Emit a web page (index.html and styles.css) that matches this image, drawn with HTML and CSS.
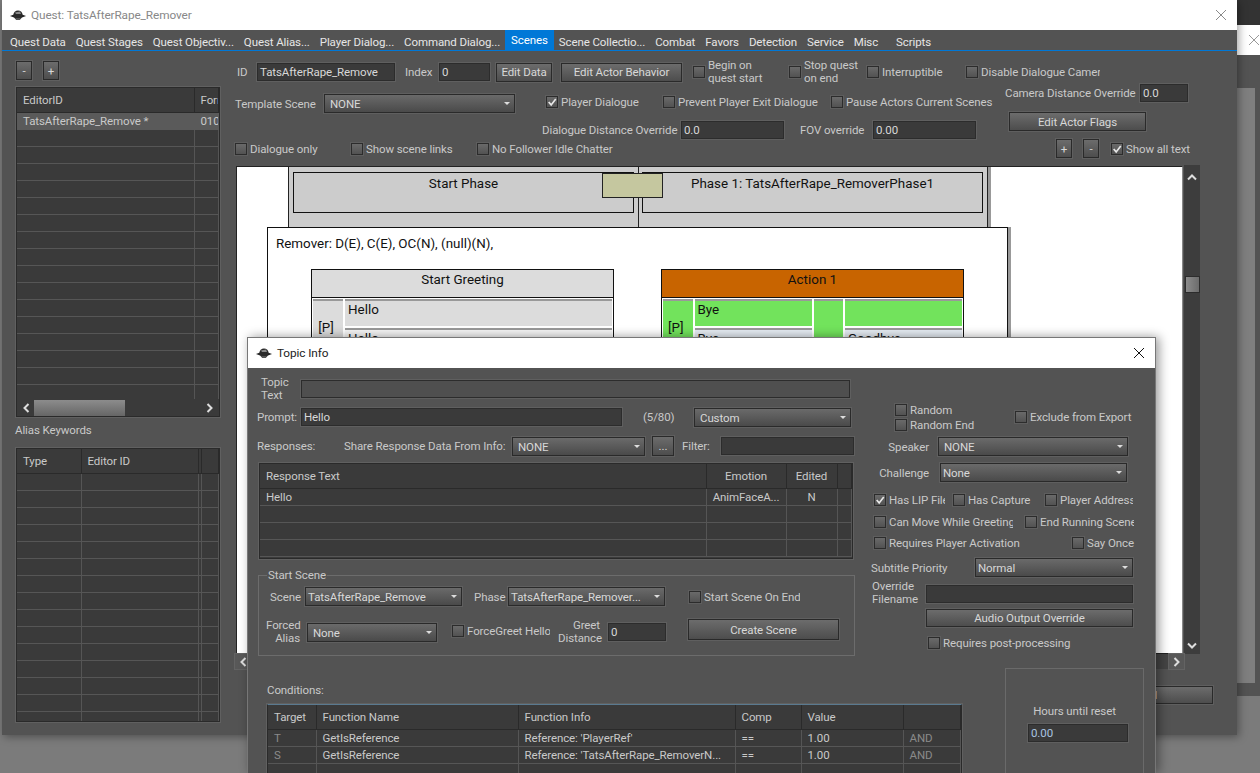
FILE: index.html
```html
<!DOCTYPE html>
<html lang="en">
<head>
    <meta charset="UTF-8">
    <title>Quest: TatsAfterRape_Remover</title>
    <link rel="stylesheet" href="styles.css">
</head>
<body>
    <svg class="defs" width="0" height="0">
        <symbol id="app-icon" viewBox="0 0 16 12">
            <path d="M0 7 L4 5.5 L12 5.5 L16 7 L12 8.5 L4 8.5 Z" fill="#222"/>
            <circle cx="8" cy="6" r="4.6" fill="#2a2a2a"/>
            <path d="M5 3.5 L10 2.5 L11 5 L6 5 Z" fill="#8a8a8a"/>
            <path d="M5 9 L11 9 L10 11 L6 11 Z" fill="#555"/>
        </symbol>
        <symbol id="close-x" viewBox="0 0 12 12">
            <path d="M1 1 L11 11 M11 1 L1 11" fill="none" stroke="currentColor" stroke-width="1"/>
        </symbol>
        <symbol id="tick" viewBox="0 0 12 12">
            <path d="M2 6 L5 9.5 L10.5 2.5" fill="none" stroke="#e8e8e8" stroke-width="2"/>
        </symbol>
        <symbol id="chev-up" viewBox="0 0 12 8">
            <path d="M2 6.5 L6 2.5 L10 6.5" fill="none" stroke="#ddd" stroke-width="2"/>
        </symbol>
        <symbol id="chev-down" viewBox="0 0 12 8">
            <path d="M2 1.5 L6 5.5 L10 1.5" fill="none" stroke="#ddd" stroke-width="2"/>
        </symbol>
        <symbol id="chev-left" viewBox="0 0 8 12">
            <path d="M6.5 2 L2.5 6 L6.5 10" fill="none" stroke="#ddd" stroke-width="2"/>
        </symbol>
        <symbol id="chev-right" viewBox="0 0 8 12">
            <path d="M1.5 2 L5.5 6 L1.5 10" fill="none" stroke="#ddd" stroke-width="2"/>
        </symbol>
    </svg>

    <!-- window behind the quest window, only its edge shows -->
    <div class="back-window">
        <div class="back-title"><svg class="back-x"><use href="#close-x"/></svg></div>
        <div class="back-panel"></div>
    </div>

    <!-- quest window -->
    <div class="window quest-window">
        <div class="titlebar">
            <svg class="app-icon"><use href="#app-icon"/></svg>
            <span class="title-text muted-title">Quest: TatsAfterRape_Remover</span>
            <svg class="close-x light-x"><use href="#close-x"/></svg>
        </div>
        <div class="tabs">
            <span class="tab">Quest Data</span>
            <span class="tab">Quest Stages</span>
            <span class="tab">Quest Objectiv...</span>
            <span class="tab">Quest Alias...</span>
            <span class="tab">Player Dialog...</span>
            <span class="tab">Command Dialog...</span>
            <span class="tab active">Scenes</span>
            <span class="tab">Scene Collectio...</span>
            <span class="tab">Combat</span>
            <span class="tab">Favors</span>
            <span class="tab">Detection</span>
            <span class="tab">Service</span>
            <span class="tab">Misc</span>
            <span class="tab ml-8">Scripts</span>
        </div>

        <div class="quest-body">
            <div class="quest-side">
                <div class="row h-19">
                    <button class="btn w-16 ml-1">-</button>
                    <button class="btn w-16 ml-11">+</button>
                </div>
                <div class="grid-box side-table">
                    <table class="grid">
                        <colgroup><col class="w-177"><col></colgroup>
                        <tr><th>EditorID</th><th>Form</th></tr>
                        <tr class="selected"><td>TatsAfterRape_Remove *</td><td>010</td></tr>
                        <tr><td></td><td></td></tr>
                        <tr><td></td><td></td></tr>
                        <tr><td></td><td></td></tr>
                        <tr><td></td><td></td></tr>
                        <tr><td></td><td></td></tr>
                        <tr><td></td><td></td></tr>
                        <tr><td></td><td></td></tr>
                        <tr><td></td><td></td></tr>
                        <tr><td></td><td></td></tr>
                        <tr><td></td><td></td></tr>
                        <tr><td></td><td></td></tr>
                        <tr><td></td><td></td></tr>
                        <tr><td></td><td></td></tr>
                        <tr><td></td><td></td></tr>
                        <tr><td></td><td></td></tr>
                        <tr><td></td><td></td></tr>
                    </table>
                    <div class="side-hscroll">
                        <svg class="chev-h"><use href="#chev-left"/></svg>
                        <span class="side-thumb"></span>
                        <svg class="chev-h chev-end"><use href="#chev-right"/></svg>
                    </div>
                </div>
                <div class="alias-label">Alias Keywords</div>
                <div class="grid-box alias-table">
                    <table class="grid">
                        <colgroup><col class="w-64"><col class="w-117"><col class="w-3"><col></colgroup>
                        <tr><th>Type</th><th>Editor ID</th><th></th><th></th></tr>
                        <tr><td></td><td></td><td></td><td></td></tr>
                        <tr><td></td><td></td><td></td><td></td></tr>
                        <tr><td></td><td></td><td></td><td></td></tr>
                        <tr><td></td><td></td><td></td><td></td></tr>
                        <tr><td></td><td></td><td></td><td></td></tr>
                        <tr><td></td><td></td><td></td><td></td></tr>
                        <tr><td></td><td></td><td></td><td></td></tr>
                        <tr><td></td><td></td><td></td><td></td></tr>
                        <tr><td></td><td></td><td></td><td></td></tr>
                        <tr><td></td><td></td><td></td><td></td></tr>
                        <tr><td></td><td></td><td></td><td></td></tr>
                        <tr><td></td><td></td><td></td><td></td></tr>
                        <tr><td></td><td></td><td></td><td></td></tr>
                        <tr><td></td><td></td><td></td><td></td></tr>
                        <tr><td></td><td></td><td></td><td></td></tr>
                    </table>
                </div>
            </div>

            <div class="quest-main">
                <div class="row h-22">
                    <label class="w-22 pl-2">ID</label>
                    <div class="input w-138">TatsAfterRape_Remove</div>
                    <label class="ml-10 w-34">Index</label>
                    <div class="input w-51">0</div>
                    <button class="btn w-56 ml-6 h-19">Edit Data</button>
                    <button class="btn w-121 ml-9 h-19">Edit Actor Behavior</button>
                    <div class="check-item w-96 ml-11"><span class="check"></span><span class="two-line">Begin on<br>quest start</span></div>
                    <div class="check-item w-78"><span class="check"></span><span class="two-line">Stop quest<br>on end</span></div>
                    <div class="check-item w-99"><span class="check"></span><span>Interruptible</span></div>
                    <div class="check-item"><span class="check"></span><span class="clip w-119">Disable Dialogue Camera</span></div>
                </div>

                <div class="quest-lower">
                    <div class="w-770">
                        <div class="row h-19 mt-10">
                            <label class="w-89">Template Scene</label>
                            <div class="select w-191">NONE</div>
                            <div class="check-item raised w-117 ml-31"><span class="check"><svg><use href="#tick"/></svg></span><span>Player Dialogue</span></div>
                            <div class="check-item raised w-168"><span class="check"></span><span>Prevent Player Exit Dialogue</span></div>
                            <div class="check-item raised"><span class="check"></span><span>Pause Actors Current Scenes</span></div>
                        </div>
                        <div class="row h-18 mt-8">
                            <label class="w-139 ml-307">Dialogue Distance Override</label>
                            <div class="input w-103">0.0</div>
                            <label class="w-73 ml-16">FOV override</label>
                            <div class="input w-103">0.00</div>
                        </div>
                        <div class="row h-18 mt-1">
                            <div class="check-item w-116"><span class="check"></span><span>Dialogue only</span></div>
                            <div class="check-item w-126"><span class="check"></span><span>Show scene links</span></div>
                            <div class="check-item"><span class="check"></span><span>No Follower Idle Chatter</span></div>
                        </div>
                    </div>
                    <div class="camera-block">
                        <div class="row h-18">
                            <label class="w-135">Camera Distance Override</label>
                            <div class="input w-48">0.0</div>
                        </div>
                        <button class="btn w-137 h-19 ml-4 mt-10">Edit Actor Flags</button>
                        <div class="row h-19 mt-8 ml-51">
                            <button class="btn w-16">+</button>
                            <button class="btn w-16 ml-11">-</button>
                            <div class="check-item ml-12"><span class="check"><svg><use href="#tick"/></svg></span><span>Show all text</span></div>
                        </div>
                    </div>
                </div>

                <div class="scene-view">
                    <div class="canvas">
                        <div class="phases">
                            <div class="phase-half"><div class="phase-box">Start Phase</div></div>
                            <div class="phase-half"><div class="phase-box">Phase 1: TatsAfterRape_RemoverPhase1</div></div>
                            <div class="phase-link"></div>
                        </div>
                        <div class="actor-box">
                            <div class="actor-name">Remover: D(E), C(E), OC(N), (null)(N),</div>
                            <div class="actions">
                                <div class="action">
                                    <div class="action-head grey-head">Start Greeting</div>
                                    <div class="lines">
                                        <div class="line-tag">[P]</div>
                                        <div class="line-col">
                                            <div class="line-cell grey-cell">Hello</div>
                                            <div class="line-cell pale-cell">Hello</div>
                                        </div>
                                    </div>
                                </div>
                                <div class="action">
                                    <div class="action-head orange-head">Action 1</div>
                                    <div class="lines">
                                        <div class="line-tag green-cell">[P]</div>
                                        <div class="line-col narrow">
                                            <div class="line-cell green-cell">Bye</div>
                                            <div class="line-cell blue-cell">Bye</div>
                                        </div>
                                        <div class="line-gap green-cell"></div>
                                        <div class="line-col narrow">
                                            <div class="line-cell green-cell"></div>
                                            <div class="line-cell blue-cell">Goodbye</div>
                                        </div>
                                    </div>
                                </div>
                            </div>
                        </div>
                    </div>
                    <div class="vscroll">
                        <svg class="chev-v"><use href="#chev-up"/></svg>
                        <span class="vthumb"></span>
                        <svg class="chev-v chev-end"><use href="#chev-down"/></svg>
                    </div>
                </div>
                <div class="hscroll">
                    <span class="hscroll-btn"><svg class="chev-h"><use href="#chev-left"/></svg></span>
                    <span class="hscroll-btn"><svg class="chev-h"><use href="#chev-right"/></svg></span>
                </div>
                <div class="quest-foot">
                    <button class="btn w-146 h-18">Cancel</button>
                </div>
            </div>
        </div>
    </div>

    <!-- topic info dialog -->
    <div class="window topic-window">
        <div class="titlebar">
            <svg class="app-icon"><use href="#app-icon"/></svg>
            <span class="title-text">Topic Info</span>
            <svg class="close-x"><use href="#close-x"/></svg>
        </div>
        <div class="topic-top">
            <div class="topic-left">
                <div class="row h-18 mt-12">
                    <label class="two-line w-40 ml-13">Topic<br>Text</label>
                    <div class="input off w-549"></div>
                </div>
                <div class="row h-18 mt-10">
                    <label class="w-44 ml-9">Prompt:</label>
                    <div class="input w-321">Hello</div>
                    <label class="w-51 ml-21">(5/80)</label>
                    <div class="select w-157">Custom</div>
                </div>
                <div class="row h-20 mt-10">
                    <label class="w-87 ml-9">Responses:</label>
                    <label class="w-168">Share Response Data From Info:</label>
                    <div class="select w-133">NONE</div>
                    <button class="btn w-22 h-20 ml-7">...</button>
                    <label class="w-39 ml-8">Filter:</label>
                    <div class="input w-133"></div>
                </div>
                <div class="grid-box response-table">
                    <table class="grid">
                        <colgroup><col class="w-446"><col class="w-80"><col class="w-51"><col></colgroup>
                        <tr><th>Response Text</th><th class="center">Emotion</th><th class="center">Edited</th><th></th></tr>
                        <tr><td>Hello</td><td class="center">AnimFaceA...</td><td class="center">N</td><td></td></tr>
                        <tr><td></td><td></td><td></td><td></td></tr>
                        <tr><td></td><td></td><td></td><td></td></tr>
                        <tr><td></td><td></td><td></td><td></td></tr>
                    </table>
                </div>
                <fieldset class="start-scene">
                    <legend>Start Scene</legend>
                    <div class="row h-19 mt-5">
                        <label class="w-35 ml-11">Scene</label>
                        <div class="select tight w-157">TatsAfterRape_Remove</div>
                        <label class="w-34 ml-12">Phase</label>
                        <div class="select tight w-157">TatsAfterRape_Remover...</div>
                        <div class="check-item ml-24"><span class="check"></span><span class="clip w-96">Start Scene On End</span></div>
                    </div>
                    <div class="row scene-row-b">
                        <label class="two-line right w-34 ml-7">Forced<br>Alias</label>
                        <div class="select w-130 ml-7">None</div>
                        <div class="check-item w-98 ml-15"><span class="check"></span><span class="clip w-83">ForceGreet Hello</span></div>
                        <label class="two-line right w-42 ml-8">Greet<br>Distance</label>
                        <div class="input w-58 ml-8">0</div>
                        <button class="btn create-btn w-151 ml-22">Create Scene</button>
                    </div>
                </fieldset>
            </div>

            <div class="topic-right">
                <div class="random-row">
                    <div class="w-120 ml-24">
                        <div class="check-item h-15"><span class="check"></span><span>Random</span></div>
                        <div class="check-item h-15"><span class="check"></span><span>Random End</span></div>
                    </div>
                    <div class="check-item"><span class="check"></span><span>Exclude from Export</span></div>
                </div>
                <div class="row h-19 mt-5">
                    <label class="right w-58">Speaker</label>
                    <div class="select w-190 ml-9">NONE</div>
                </div>
                <div class="row h-19 mt-7">
                    <label class="right w-58">Challenge</label>
                    <div class="select tight w-187 ml-11">None</div>
                </div>
                <div class="row h-18 mt-9 ml-3">
                    <div class="check-item w-79"><span class="check"><svg><use href="#tick"/></svg></span><span class="clip w-56">Has LIP File</span></div>
                    <div class="check-item w-92"><span class="check"></span><span>Has Capture</span></div>
                    <div class="check-item"><span class="check"></span><span class="clip w-73">Player Address</span></div>
                </div>
                <div class="row h-18 mt-4 ml-3">
                    <div class="check-item w-151"><span class="check"></span><span class="clip w-124">Can Move While Greeting</span></div>
                    <div class="check-item"><span class="check"></span><span class="clip w-94">End Running Scene</span></div>
                </div>
                <div class="row h-18 mt-3 ml-3">
                    <div class="check-item w-198"><span class="check"></span><span>Requires Player Activation</span></div>
                    <div class="check-item"><span class="check"></span><span>Say Once</span></div>
                </div>
                <div class="row h-19 mt-6">
                    <label class="w-104">Subtitle Priority</label>
                    <div class="select tight w-158">Normal</div>
                </div>
                <div class="row h-18 mt-8 ml-1">
                    <label class="two-line w-54 lift">Override<br>Filename</label>
                    <div class="input w-207"></div>
                </div>
                <button class="btn w-207 h-18 mt-6 ml-55">Audio Output Override</button>
                <div class="check-item h-12 mt-10 ml-57"><span class="check"></span><span>Requires post-processing</span></div>
            </div>
        </div>
        <div class="topic-bottom">
            <div class="conditions">
                <div class="conditions-label">Conditions:</div>
                <div class="grid-box conditions-table">
                    <table class="grid">
                        <colgroup><col class="w-48"><col class="w-202"><col class="w-217"><col class="w-66"><col class="w-102"><col></colgroup>
                        <tr><th>Target</th><th>Function Name</th><th>Function Info</th><th>Comp</th><th>Value</th><th></th></tr>
                        <tr><td class="faded">T</td><td>GetIsReference</td><td>Reference: 'PlayerRef'</td><td>==</td><td>1.00</td><td class="faded">AND</td></tr>
                        <tr><td class="faded">S</td><td>GetIsReference</td><td>Reference: 'TatsAfterRape_RemoverN...</td><td>==</td><td>1.00</td><td class="faded">AND</td></tr>
                        <tr><td></td><td></td><td></td><td></td><td></td><td></td></tr>
                    </table>
                </div>
            </div>
            <div class="hours-panel">
                <div class="hours-label">Hours until reset</div>
                <div class="input w-100 hours-input">0.00</div>
            </div>
        </div>
    </div>
</body>
</html>
```

FILE: styles.css
```css
* {
    margin: 0;
    padding: 0;
    box-sizing: border-box;
}

html, body {
    width: 1260px;
    height: 773px;
    overflow: hidden;
}

body {
    position: relative;
    background: #7b7b7b;
    font-family: Roboto, "Liberation Sans", sans-serif;
    font-size: 11.5px;
    letter-spacing: -0.1px;
    line-height: 14px;
    color: #c9c9c9;
}

.defs {
    position: absolute;
}

/* windows */
.window {
    position: absolute;
    background: #535353;
    overflow: hidden;
    box-shadow: 2px 2px 8px rgba(0,0,0,0.35);
}

.quest-window {
    left: 2px;
    top: 0;
    width: 1235px;
    height: 735px;
}

.topic-window {
    left: 247px;
    top: 337px;
    width: 909px;
    height: 436px;
    border: 1px solid #777;
    border-bottom: none;
    box-shadow: 3px 0 10px rgba(0,0,0,0.4);
}

.back-window {
    position: absolute;
    left: 1237px;
    top: 0;
    width: 23px;
    height: 696px;
    background: #535353;
    border-top: 25px solid #333;
}

.back-title {
    height: 30px;
    background: #fff;
    color: #999;
}

.back-x {
    width: 12px;
    height: 12px;
    margin: 9px 0 0 11px;
}

.back-panel {
    width: 18px;
    height: 595px;
    margin-top: 33px;
    background: #7f7f7f;
}

.titlebar {
    height: 30px;
    background: #fff;
    display: flex;
    align-items: center;
    color: #222;
    padding: 0 10px 0 8px;
    font-size: 11.8px;
}

.app-icon {
    width: 16px;
    height: 12px;
    margin-right: 5px;
}

.title-text {
    flex: 1;
}

.muted-title {
    color: #888;
}

.close-x {
    width: 12px;
    height: 12px;
    color: #111;
    margin-right: 0;
}

.light-x {
    color: #8a8a8a;
}

/* tabs */
.tabs {
    height: 21px;
    display: flex;
    padding-left: 3px;
    border-bottom: 1px solid #0078d7;
    color: #e6e6e6;
}

.tab {
    padding: 5px 5px 0;
    white-space: nowrap;
}

.tab.active {
    padding: 3px 6px 0;
    background: #0078d7;
    color: #fff;
}

/* general form bits */
.row {
    display: flex;
    align-items: center;
}

label {
    display: block;
    white-space: nowrap;
}

.two-line {
    line-height: 13px;
    white-space: nowrap;
}

.right {
    text-align: right;
}

.lift {
    margin-top: -3px;
}

.raised {
    margin-top: -3px;
}

.clip {
    overflow: hidden;
    white-space: nowrap;
    display: block;
}

.input {
    height: 18px;
    background: #3a3a3a;
    border: 1px solid #2c2c2c;
    box-shadow: 0 0 0 1px #5f5f5f;
    padding: 1px 2px;
    color: #d8d8d8;
    white-space: nowrap;
    overflow: hidden;
}

.input.off {
    background: #4f4f4f;
}

.select {
    position: relative;
    height: 19px;
    background: linear-gradient(#6a6a6a, #4a4a4a);
    border: 1px solid #2a2a2a;
    box-shadow: 0 0 0 1px #5f5f5f;
    padding: 2px 5px;
    color: #d8d8d8;
    white-space: nowrap;
    overflow: hidden;
}

.select.tight {
    padding-left: 2px;
}

.select::after {
    content: "";
    position: absolute;
    right: 4px;
    top: 7px;
    border-left: 3px solid transparent;
    border-right: 3px solid transparent;
    border-top: 3px solid #ddd;
}

.btn {
    display: block;
    height: 19px;
    background: linear-gradient(#6c6c6c, #4d4d4d);
    border: 1px solid #2a2a2a;
    box-shadow: 0 0 0 1px #5f5f5f;
    font: inherit;
    letter-spacing: inherit;
    color: #d8d8d8;
    white-space: nowrap;
}

.create-btn {
    height: 21px;
}

.check-item {
    display: flex;
    align-items: center;
    gap: 3px;
    white-space: nowrap;
}

.check {
    flex: none;
    width: 12px;
    height: 12px;
    background: linear-gradient(#6a6a6a, #525252);
    border: 1px solid #2c2c2c;
    box-shadow: 0 0 0 1px #5e5e5e;
}

.check svg {
    display: block;
    width: 10px;
    height: 10px;
}

/* grids */
.grid-box {
    background: #3a3a3a;
    border: 1px solid #2a2a2a;
    box-shadow: 0 0 0 1px #606060;
    overflow: hidden;
}

.grid {
    width: 100%;
    table-layout: fixed;
    border-collapse: collapse;
}

.grid th, .grid td {
    height: 17px;
    padding: 0 6px;
    border-right: 1px solid #555;
    border-bottom: 1px solid #565656;
    text-align: left;
    font-weight: normal;
    white-space: nowrap;
    overflow: hidden;
}

.grid th {
    height: 24px;
    background: #3a3a3a;
    border-right-color: #2a2a2a;
    border-bottom-color: #2a2a2a;
}

.grid .center {
    text-align: center;
    padding: 0 2px;
}

.grid .faded {
    color: #8a8a8a;
}

.grid .selected td {
    background: #5a5a5a;
    border-color: #5a5a5a;
}

/* quest window layout */
.quest-body {
    display: flex;
    padding: 10px 0 0 13px;
}

.quest-side {
    width: 205px;
    flex: none;
}

.side-table {
    position: relative;
    height: 330px;
    margin-top: 7px;
    margin-left: 1px;
}

.side-hscroll {
    position: absolute;
    left: 0;
    right: 0;
    bottom: 0;
    height: 17px;
    background: #3a3a3a;
    display: flex;
    align-items: center;
    padding: 0 5px;
}

.side-thumb {
    width: 91px;
    height: 16px;
    margin-left: 4px;
    background: linear-gradient(#8c8c8c, #666);
}

.alias-label {
    height: 31px;
    padding-top: 6px;
}

.alias-table {
    height: 274px;
    margin-left: 1px;
}

.quest-main {
    margin-left: 15px;
    width: 965px;
}

.quest-lower {
    display: flex;
    margin-top: 1px;
}

.camera-block {
    width: 190px;
}

.scene-view {
    display: flex;
    height: 489px;
    margin-top: 7px;
    margin-left: 1px;
}

.canvas {
    width: 948px;
    margin-top: 1px;
    background: #fff;
    border: 1px solid #222;
    border-right-color: #888;
    overflow: hidden;
    color: #111;
    font-size: 13.4px;
    letter-spacing: 0;
}

.vscroll {
    width: 16px;
    margin-left: 1px;
    background: #3d3d3d;
    display: flex;
    flex-direction: column;
    align-items: center;
    padding: 8px 0 4px;
}

.vthumb {
    width: 15px;
    height: 17px;
    margin-top: 95px;
    background: linear-gradient(90deg, #8c8c8c, #6c6c6c);
    border: 1px solid #2c2c2c;
}

.chev-v {
    width: 12px;
    height: 8px;
    flex: none;
}

.chev-h {
    width: 8px;
    height: 12px;
    flex: none;
    display: block;
}

.chev-end {
    margin-left: auto;
    margin-top: auto;
}

.vscroll .chev-end {
    margin-left: 0;
}

.side-hscroll .chev-end {
    margin-top: 0;
}

.hscroll {
    display: flex;
    justify-content: space-between;
    width: 949px;
    height: 15px;
    background: #444;
}

.hscroll-btn {
    width: 15px;
    background: #585858;
    box-shadow: 0 0 0 1px #636363;
    display: flex;
    align-items: center;
    justify-content: center;
}

.quest-foot {
    display: flex;
    justify-content: flex-end;
    margin-top: 17px;
    padding-right: 0;
    margin-right: -13px;
}

/* scene canvas */
.phases {
    position: relative;
    display: flex;
    width: 700px;
    height: 61px;
    margin-left: 51px;
    background: #ccc;
    border: 1px solid #222;
    border-top: none;
    box-shadow: 3px 0 0 #999;
}

.phase-half {
    width: 350px;
    padding: 5px 4px 0;
}

.phase-half + .phase-half {
    padding-left: 3px;
    border-left: 1px solid #222;
}

.phase-box {
    height: 41px;
    border: 1px solid #111;
    text-align: center;
    padding-top: 4px;
}

.phase-link {
    position: absolute;
    left: 313px;
    top: 6px;
    width: 61px;
    height: 25px;
    background: #c5c79f;
    border: 1px solid #222;
}

.actor-box {
    width: 741px;
    height: 300px;
    margin-left: 30px;
    margin-top: -1px;
    position: relative;
    background: #fff;
    border: 1px solid #111;
    box-shadow: 3px 0 0 #999;
    padding: 9px 8px 0;
}

.actor-name {
    height: 32px;
}

.actions {
    display: flex;
    gap: 47px;
    margin-left: 35px;
}

.action {
    width: 303px;
    border: 1px solid #111;
    background: #fff;
}

.action-head {
    height: 28px;
    text-align: center;
    padding-top: 3px;
    border-bottom: 1px solid #111;
}

.grey-head {
    background: #dcdcdc;
}

.orange-head {
    background: #c86400;
}

.lines {
    display: flex;
    gap: 2px;
    padding: 1px;
}

.line-tag {
    width: 30px;
    padding: 20px 4px 0 0;
    text-align: center;
    border-top: 2px solid #999;
    background: #dcdcdc;
}

.line-gap {
    width: 30px;
    border-top: 2px solid #999;
}

.line-col {
    flex: 1;
    display: flex;
    flex-direction: column;
    gap: 2px;
}

.line-col.narrow {
    flex: none;
    width: 117px;
}

.line-cell {
    height: 27px;
    padding: 2px 3px 0;
    border-top: 2px solid #999;
}

.grey-cell {
    background: #dcdcdc;
}

.pale-cell {
    background: #f6f6f6;
}

.green-cell {
    background: #72e35c;
}

.blue-cell {
    background: #e6edf4;
}

/* topic dialog layout */
.topic-top {
    display: flex;
    height: 288px;
}

.topic-left {
    width: 610px;
}

.topic-right {
    width: 265px;
    margin-left: 13px;
}

.response-table {
    width: 594px;
    height: 96px;
    margin: 7px 0 0 11px;
}

.start-scene {
    width: 597px;
    height: 88px;
    margin: 9px 0 0 10px;
    border: 1px solid #6c6c6c;
    min-width: 0;
}

.start-scene legend {
    margin-left: 8px;
    padding: 0 1px;
}

.scene-row-b {
    align-items: flex-start;
    margin-top: 13px;
    height: 23px;
}

.scene-row-b .select, .scene-row-b .input {
    margin-top: 4px;
}

.scene-row-b .check-item {
    margin-top: 5px;
}

.random-row {
    display: flex;
    align-items: center;
    height: 30px;
    margin-top: 34px;
}

.topic-bottom {
    display: flex;
    padding-top: 12px;
}

.conditions {
    width: 714px;
    flex: none;
}

.conditions-label {
    margin: 15px 0 0 19px;
}

.conditions-table {
    width: 695px;
    height: 80px;
    margin: 7px 0 0 19px;
    border-top-color: #5a7a90;
}

.hours-panel {
    width: 139px;
    height: 120px;
    margin-left: 43px;
    border: 1px solid #6a6a6a;
    padding-top: 35px;
    text-align: center;
}

.hours-input {
    margin: 6px 0 0 22px;
    text-align: left;
    color: #a9c4e0;
}

/* sizes used by the form rows */
.h-12 { height: 12px; }
.h-15 { height: 15px; }
.h-18 { height: 18px; }
.h-19 { height: 19px; }
.h-20 { height: 20px; }
.h-22 { height: 22px; }

.w-3 { width: 3px; }
.w-16 { width: 16px; }
.w-22 { width: 22px; }
.w-34 { width: 34px; }
.w-35 { width: 35px; }
.w-39 { width: 39px; }
.w-40 { width: 40px; }
.w-42 { width: 42px; }
.w-44 { width: 44px; }
.w-48 { width: 48px; }
.w-51 { width: 51px; }
.w-54 { width: 54px; }
.w-56 { width: 56px; }
.w-58 { width: 58px; }
.w-64 { width: 64px; }
.w-66 { width: 66px; }
.w-73 { width: 73px; }
.w-78 { width: 78px; }
.w-79 { width: 79px; }
.w-80 { width: 80px; }
.w-83 { width: 83px; }
.w-87 { width: 87px; }
.w-89 { width: 89px; }
.w-92 { width: 92px; }
.w-94 { width: 94px; }
.w-96 { width: 96px; }
.w-98 { width: 98px; }
.w-99 { width: 99px; }
.w-100 { width: 100px; }
.w-102 { width: 102px; }
.w-103 { width: 103px; }
.w-104 { width: 104px; }
.w-116 { width: 116px; }
.w-117 { width: 117px; }
.w-119 { width: 119px; }
.w-120 { width: 120px; }
.w-121 { width: 121px; }
.w-124 { width: 124px; }
.w-126 { width: 126px; }
.w-130 { width: 130px; }
.w-133 { width: 133px; }
.w-135 { width: 135px; }
.w-137 { width: 137px; }
.w-138 { width: 138px; }
.w-139 { width: 139px; }
.w-146 { width: 146px; }
.w-151 { width: 151px; }
.w-157 { width: 157px; }
.w-158 { width: 158px; }
.w-168 { width: 168px; }
.w-177 { width: 177px; }
.w-187 { width: 187px; }
.w-190 { width: 190px; }
.w-191 { width: 191px; }
.w-198 { width: 198px; }
.w-202 { width: 202px; }
.w-207 { width: 207px; }
.w-217 { width: 217px; }
.w-321 { width: 321px; }
.w-446 { width: 446px; }
.w-549 { width: 549px; }
.w-770 { width: 770px; }

.pl-2 { padding-left: 2px; }

.ml-1 { margin-left: 1px; }
.ml-3 { margin-left: 3px; }
.ml-4 { margin-left: 4px; }
.ml-6 { margin-left: 6px; }
.ml-7 { margin-left: 7px; }
.ml-8 { margin-left: 8px; }
.ml-9 { margin-left: 9px; }
.ml-10 { margin-left: 10px; }
.ml-11 { margin-left: 11px; }
.ml-12 { margin-left: 12px; }
.ml-13 { margin-left: 13px; }
.ml-15 { margin-left: 15px; }
.ml-16 { margin-left: 16px; }
.ml-21 { margin-left: 21px; }
.ml-22 { margin-left: 22px; }
.ml-24 { margin-left: 24px; }
.ml-31 { margin-left: 31px; }
.ml-51 { margin-left: 51px; }
.ml-55 { margin-left: 55px; }
.ml-57 { margin-left: 57px; }
.ml-307 { margin-left: 307px; }

.mt-1 { margin-top: 1px; }
.mt-3 { margin-top: 3px; }
.mt-4 { margin-top: 4px; }
.mt-5 { margin-top: 5px; }
.mt-6 { margin-top: 6px; }
.mt-7 { margin-top: 7px; }
.mt-8 { margin-top: 8px; }
.mt-9 { margin-top: 9px; }
.mt-10 { margin-top: 10px; }
.mt-12 { margin-top: 12px; }
```
